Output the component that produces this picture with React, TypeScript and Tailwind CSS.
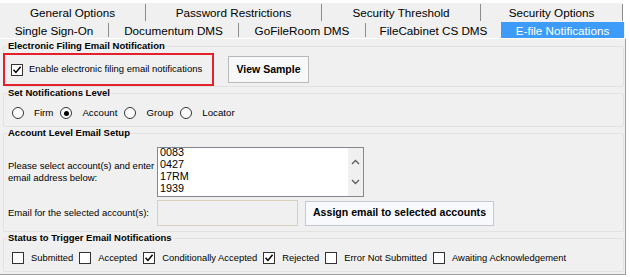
import React from "react";

const row1 = [
  { label: "General Options", w: "w-[146px]" },
  { label: "Password Restrictions", w: "w-[176px]" },
  { label: "Security Threshold", w: "w-[159px]" },
  { label: "Security Options", w: "w-[142px]" },
];

const row2 = [
  { label: "Single Sign-On", w: "w-[109px]" },
  { label: "Documentum DMS", w: "w-[130px]" },
  { label: "GoFileRoom DMS", w: "w-[127px]" },
  { label: "FileCabinet CS DMS", w: "w-[135px]", last: true },
];

const accounts = ["0083", "0427", "17RM", "1939"];

const statuses = [
  { label: "Submitted", on: false },
  { label: "Accepted", on: false },
  { label: "Conditionally Accepted", on: true },
  { label: "Rejected", on: true },
  { label: "Error Not Submitted", on: false },
  { label: "Awaiting Acknowledgement", on: false },
];

function Check({ checked }: { checked?: boolean }) {
  return (
    <span className="flex h-[12px] w-[12px] shrink-0 items-center justify-center border border-[#333333] bg-white">
      {checked && (
        <svg width="10" height="10" viewBox="0 0 10 10">
          <path d="M1.5 4.8 L3.9 7.4 L8.6 1.8" fill="none" stroke="#000" strokeWidth="1.5" />
        </svg>
      )}
    </span>
  );
}

function Radio({ on }: { on?: boolean }) {
  return (
    <span className="flex h-[12px] w-[12px] shrink-0 items-center justify-center rounded-full border border-[#333333] bg-white">
      {on && <span className="h-[5px] w-[5px] rounded-full bg-black" />}
    </span>
  );
}

function Group({ title, children }: { title: string; children: React.ReactNode }) {
  return (
    <fieldset className="ml-[3px] mr-[1px] min-w-0 rounded-[2px] border border-[#e2e2e2]">
      <legend className="ml-[3px] px-[1px] text-[9.5px] font-bold leading-[12px] text-black">{title}</legend>
      {children}
    </fieldset>
  );
}

export default function App() {
  return (
    <div className="h-[277px] w-[630px] bg-white pt-[3px] font-['Liberation_Sans',Arial,sans-serif] text-black">
      {/* tab strip */}
      <div className="flex h-[19px] w-[623px] bg-[#f0f0f0] text-[11.7px]">
        {row1.map((t) => (
          <div key={t.label} className={`${t.w} my-[1px] flex items-center justify-center border-r border-[#8c8c8c] pt-[1px]`}>
            {t.label}
          </div>
        ))}
      </div>
      <div className="flex h-[16px] w-[625px] bg-[#f0f0f0] text-[11.7px]">
        {row2.map((t) => (
          <div
            key={t.label}
            className={`${t.w} my-[1px] flex items-center justify-center pt-[1px] ${t.last ? "" : "border-r border-[#8c8c8c]"}`}
          >
            {t.label}
          </div>
        ))}
        <div className="flex w-[123px] items-center justify-center bg-[#3d9bf9] pt-[1px] text-white">E-file Notifications</div>
      </div>

      {/* panel */}
      <div className="h-[237px] w-[626px] border-t border-r border-b border-t-white border-r-[#a0a0a0] border-b-[#a0a0a0] bg-[#f0f0f0] pb-[2px] text-[9.5px]">
        <div className="h-[1px]" />
        <Group title="Electronic Filing Email Notification">
          <div className="mt-[1px] flex items-start">
            <div className="-ml-[1px] flex h-[33px] w-[211px] items-center border-2 border-[#e3202b] pl-[6px]">
              <Check checked />
              <span className="ml-[6px] whitespace-nowrap">Enable electronic filing email notifications</span>
            </div>
            <button className="ml-[14px] mt-[3px] h-[27px] w-[81px] border border-[#b9b9b9] bg-[#f7f8fa] text-[10.5px] font-bold">
              View Sample
            </button>
          </div>
        </Group>

        <Group title="Set Notifications Level">
          <div className="flex h-[27px] items-center pl-[8px] pt-[2px]">
            {["Firm", "Account", "Group", "Locator"].map((l, i) => (
              <div key={l} className={`flex items-center ${i ? "ml-[7px]" : ""}`}>
                <Radio on={l === "Account"} />
                <span className="ml-[10px] text-[9.7px]">{l}</span>
              </div>
            ))}
          </div>
        </Group>

        <Group title="Account Level Email Setup">
          <div className="mt-[8px] flex pl-[4px]">
            <div className="flex w-[149px] items-center whitespace-nowrap leading-[12px]">
              Please select account(s) and enter
              <br />
              email address below:
            </div>
            <div className="flex h-[50px] w-[207px] overflow-hidden border border-[#828790] bg-white">
              <div className="-mt-[2px] flex-1 pl-[2px] text-[10.8px] leading-[12px]">
                {accounts.map((a) => (
                  <div key={a}>{a}</div>
                ))}
              </div>
              <div className="flex w-[15px] flex-col items-center justify-center gap-[14px] bg-[#f0f0f0]">
                <svg width="9" height="6" viewBox="0 0 9 6">
                  <path d="M1 5 L4.5 1.5 L8 5" fill="none" stroke="#606060" strokeWidth="1.4" />
                </svg>
                <svg width="9" height="6" viewBox="0 0 9 6">
                  <path d="M1 1 L4.5 4.5 L8 1" fill="none" stroke="#606060" strokeWidth="1.4" />
                </svg>
              </div>
            </div>
          </div>
          <div className="mt-[3px] mb-[5px] flex items-center pl-[4px]">
            <span className="w-[149px] whitespace-nowrap">Email for the selected account(s):</span>
            <div className="h-[26px] w-[141px] border border-[#d8cfbd] bg-[#f0f0f0]" />
            <button className="ml-[7px] h-[25px] w-[189px] border border-[#c3c8d2] bg-[#f7f9fd] text-[10.6px] font-bold">
              Assign email to selected accounts
            </button>
          </div>
        </Group>

        <Group title="Status to Trigger Email Notifications">
          <div className="flex h-[27px] items-center pl-[8px] pt-[2px] text-[9.4px]">
            {statuses.map((s, i) => (
              <div key={s.label} className={`flex items-center ${i ? "ml-[6px]" : ""}`}>
                <Check checked={s.on} />
                <span className="ml-[7px] whitespace-nowrap">{s.label}</span>
              </div>
            ))}
          </div>
        </Group>
      </div>
    </div>
  );
}
